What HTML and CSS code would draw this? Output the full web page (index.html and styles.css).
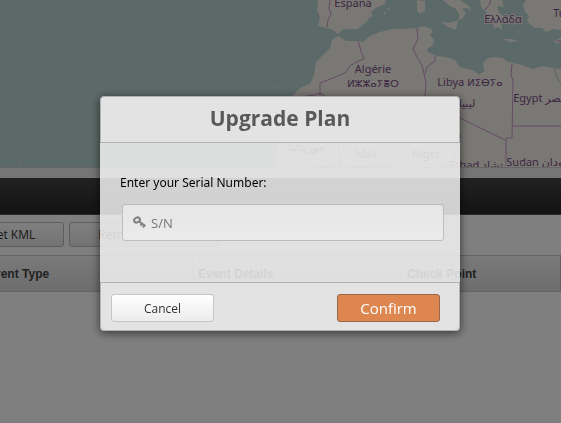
FILE: index.html
```html
<!DOCTYPE html>
<html lang="en">
    <head>
        <meta charset="UTF-8">
        <meta name="viewport" content="width=device-width, initial-scale=1.0">
        <title>Upgrade Plan</title>
        <link rel="stylesheet" href="styles.css">
    </head>
    <body>
        <div class="page">
            <div class="map">
                <svg class="map-tiles" width="561" height="167" viewBox="0 0 561 167">
                    <g class="land">
                        <!-- Iberia -->
                        <path d="M318 0L317 11L320 17L318 26L327 28L333 30L338 34L342 30L348 29L358 29L362 25L367 22L368 19L373 16L371 12L376 8L385 4L386 0Z"/>
                        <!-- Africa -->
                        <path d="M338 36L346 41L358 41L363 42L370 36L380 32L392 29L402 29L417 28L424 26L430 28L433 31L430 35L434 40L433 45L427 49L428 52L437 56L446 57L455 60L460 67L468 69L475 71L479 74L484 71L483 63L488 58L495 57L503 58L508 62L522 65L533 69L542 66L552 68L561 69V167H275L278 150L275 136L282 110L293 95L300 88L310 84L314 75L316 62L324 54L330 48L332 40Z"/>
                        <!-- Islands -->
                        <path d="M417 0L425 1V11L420 14L417 11Z"/>
                        <path d="M386 9L390 7L389 10ZM383 13L386 12L385 15Z"/>
                        <path d="M441 22L450 23L458 20L456 30L448 27Z"/>
                        <path d="M503 39L510 39L519 41L510 42Z"/>
                        <path d="M554 41L561 38V42L556 44Z"/>
                        <!-- Italy, Greece, Turkey -->
                        <path d="M443 0L450 6L456 9L460 16L458 20L462 19L466 13L462 9L467 8L471 11L469 6L460 0Z"/>
                        <path d="M480 0L481 7L486 12L489 18L497 20L493 22L494 29L498 27L502 30L501 22L507 24L504 17L499 12L497 6L504 7L502 0Z"/>
                        <path d="M526 0L523 5L525 12L529 16L527 21L534 28L542 28L546 32L553 29L561 30V0Z"/>
                    </g>
                    <g class="nile">
                        <path d="M474 70L479 74L484 71ZM554 69L558 80L561 84"/>
                    </g>
                    <g class="specks">
                        <path d="M206 17h4M214 15h2M223 22h4M272 57h3M267 86l2 3M273 87l4 1M279 88l2 1M12 149l3 5M19 160l2 5M291 84l2 2M284 87h3M507 18l3 3M512 24l4 1M517 31l3 2M514 12l4 1M521 22l3 3"/>
                    </g>
                    <g class="borders">
                        <path d="M330 0L329 8L331 14L328 20L327 27"/>
                        <path d="M358 41L361 51L364 59L356 62L350 66L345 73L333 78L320 83V96M306 96L314 95L320 93L325 96"/>
                        <path d="M417 28L418 39L413 49L418 59L422 65L424 74L426 83L425 96"/>
                        <path d="M435 56L435 61L427 67L425 74"/>
                        <path d="M491 0L489 5L485 10M556 41L561 41"/>
                        <path d="M512 64L511 75L513 80L512 138H506V166M512 126H561M460 118L505 140M460 134L461 138"/>
                        <path d="M338 140L340 165L318 167M395 140V155L390 165L350 167M458 143L454 160L440 167M288 140V152H275"/>
                    </g>
                    <g class="labels">
                        <text x="353" y="7">España</text>
                        <text x="503" y="23">Ελλάδα</text>
                        <text x="572" y="17">Türkiye</text>
                        <text x="373" y="73">Algérie</text>
                        <text class="tifinagh" x="373" y="87">ⵍⵣⵣⴰⵢⴻⵔ</text>
                        <text x="470" y="86">Libya <tspan class="tifinagh">ⵍⵉⴱⵢⴰ</tspan></text>
                        <text x="467" y="107">ليبيا</text>
                        <text x="540" y="102">Egypt مصر</text>
                        <text x="306" y="151">موريتانيا</text>
                        <text x="366" y="158">Mali</text>
                        <text x="426" y="158">Niger</text>
                        <text x="476" y="169">Tchad تشاد</text>
                        <text x="543" y="166">Sudan السودان</text>
                    </g>
                </svg>
            </div>
            <div class="splitter"></div>
            <div class="nav-bar"></div>
            <div class="content">
                <div class="toolbar">
                    <button class="tool-btn" type="button">Get KML</button>
                    <button class="tool-btn" type="button">Retrieve Events</button>
                </div>
                <table class="events">
                    <thead>
                        <tr>
                            <th>Event Type</th>
                            <th>Event Details</th>
                            <th>Check Point</th>
                        </tr>
                    </thead>
                </table>
            </div>
        </div>

        <div class="overlay">
            <form class="dialog" role="dialog" aria-labelledby="dialogTitle">
                <h1 class="dialog-title" id="dialogTitle">Upgrade Plan</h1>
                <div class="dialog-body">
                    <label for="serial">Enter your Serial Number:</label>
                    <div class="input-box">
                        <svg class="key-icon" width="13" height="13" viewBox="0 0 13 13">
                            <ellipse cx="4" cy="4" rx="3" ry="2.4" transform="rotate(-25 4 4)"/>
                            <path d="M6 5.4L12.4 10M9 7.6L7.6 9.6M11.4 9.2L10 11.4"/>
                        </svg>
                        <input type="text" id="serial" placeholder="S/N">
                    </div>
                </div>
                <div class="dialog-footer">
                    <button class="btn cancel-btn" type="button">Cancel</button>
                    <button class="btn confirm-btn" type="button">Confirm</button>
                </div>
            </form>
        </div>
    </body>
</html>
```
FILE: styles.css
```css
* {
    box-sizing: border-box;
}

body {
    margin: 0;
    font-family: "Open Sans", "Noto Sans", sans-serif;
    font-size: 12px;
    color: #000;
    background: #fff;
}

.page {
    height: 100vh;
    overflow: hidden;
}

/* map */
.map {
    height: 168px;
    overflow: hidden;
    background: #b6d2d0;
    border-bottom: 1px solid #ccc;
}

.map-tiles {
    display: block;
}

.land {
    fill: #f4f0e8;
}

.nile {
    fill: #b6d2d0;
    stroke: #b6d2d0;
}

.specks {
    fill: none;
    stroke: #dcdcd4;
}

.borders {
    fill: none;
    stroke: #c896c8;
}

.labels {
    font-family: "Noto Sans", "DejaVu Sans", sans-serif;
    font-size: 11px;
    fill: #7c4c86;
    stroke: #f4f0e8;
    stroke-width: 2px;
    paint-order: stroke;
    text-anchor: middle;
}

.tifinagh {
    font-size: 10px;
}

.splitter {
    height: 10px;
    background: #eaeaea;
}

.nav-bar {
    height: 37px;
    background: linear-gradient(#444, #262626);
    border-bottom: 1px solid #555;
}

/* the list is scrolled a little to the right */
.content {
    margin-left: -41px;
}

.toolbar {
    display: flex;
    gap: 5px;
    padding: 7px 0 8px;
}

.tool-btn {
    height: 25px;
    padding: 0 28px;
    border: 1px solid #bbb;
    border-radius: 3px;
    background: linear-gradient(#fff, #e6e6e6);
    font-family: inherit;
    font-size: 12px;
    text-align: left;
    color: #333;
}

.tool-btn:last-child {
    min-width: 149px;
}

.events {
    width: 100%;
    table-layout: fixed;
    border-collapse: collapse;
    background: linear-gradient(#f4f4f4, #dadada);
}

.events th {
    height: 36px;
    padding: 0 5px;
    border: 1px solid #c4c4c4;
    font-family: "Liberation Sans", Arial, sans-serif;
    font-size: 12px;
    text-align: left;
    color: #444;
}

.events th:first-child {
    width: 233px;
    padding-left: 26px;
}

.events th:nth-child(2) {
    width: 209px;
}

/* dialog */
.overlay {
    position: fixed;
    inset: 0;
    padding: 96px 101px 96px 100px;
    background: rgba(0, 0, 0, 0.5);
}

.dialog {
    border-radius: 4px;
    box-shadow: 0 2px 10px rgba(0, 0, 0, 0.6);
}

.dialog-title {
    margin: 0;
    height: 47px;
    border: 1px solid #b2b2b2;
    border-radius: 4px 4px 0 0;
    background: #e3e3e3;
    font-size: 21px;
    line-height: 43px;
    text-align: center;
    color: #595959;
}

.dialog-body {
    padding: 30px 16px 41px 20px;
    background: rgba(242, 242, 242, 0.85);
}

.dialog-body label {
    display: block;
    margin-bottom: 11px;
    font-family: "Noto Sans", sans-serif;
    font-size: 12px;
    line-height: 20px;
}

.input-box {
    display: flex;
    align-items: center;
    gap: 5px;
    height: 37px;
    margin-left: 2px;
    padding: 0 10px;
    border: 1px solid #bcbcbc;
    border-radius: 3px;
    background: linear-gradient(#e6e6e6, #ebebeb);
}

.key-icon {
    flex: none;
    fill: none;
    stroke: #808080;
    stroke-width: 2;
}

.input-box input {
    flex: 1;
    min-width: 0;
    padding: 0;
    border: none;
    outline: none;
    background: none;
    font-family: inherit;
    font-size: 13px;
}

.input-box input::placeholder {
    color: #757575;
}

.dialog-footer {
    display: flex;
    justify-content: space-between;
    padding: 11px 19px 8px 10px;
    border: 1px solid #b2b2b2;
    border-radius: 0 0 4px 4px;
    background: #e3e3e3;
}

.btn {
    width: 103px;
    height: 28px;
    padding: 0;
    border: 1px solid #c6c6c6;
    border-radius: 3px;
    font-family: inherit;
    cursor: pointer;
}

.cancel-btn {
    background: linear-gradient(#fff, #ececec);
    font-size: 12px;
    color: #333;
}

.confirm-btn {
    border-color: #99694a;
    background: #dd8650;
    font-size: 15px;
    line-height: 24px;
    color: #fff;
}
```
